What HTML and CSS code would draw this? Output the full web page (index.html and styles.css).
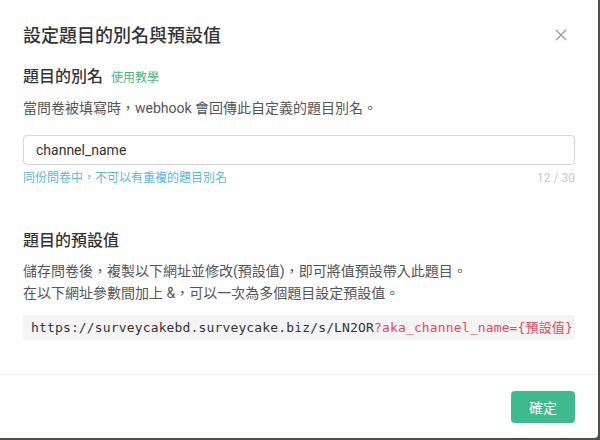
FILE: index.html
```html
<!DOCTYPE html>
<html lang="zh-Hant">
<head>
<meta charset="utf-8">
<link rel="stylesheet" href="styles.css">
</head>
<body>
<div class="modal">
  <div class="header">
    <div class="title">設定題目的別名與預設值</div>
    <svg class="close" width="12" height="12" viewBox="0 0 12 12"><path d="M1 1L11 11M11 1L1 11" stroke="#9a9a9a" stroke-width="1.3" fill="none"/></svg>
  </div>
  <div class="body">
    <div class="section-title">題目的別名 <span class="link">使用教學</span></div>
    <p class="desc">當問卷被填寫時，webhook 會回傳此自定義的題目別名。</p>
    <div class="input">channel_name</div>
    <div class="helper">
      <span class="hint">同份問卷中，不可以有重複的題目別名</span>
      <span class="count">12 / 30</span>
    </div>
    <div class="section-title second">題目的預設值</div>
    <p class="desc para">儲存問卷後，複製以下網址並修改(預設值)，即可將值預設帶入此題目。<br>在以下網址參數間加上 &amp;，可以一次為多個題目設定預設值。</p>
    <div class="code">https://surveycakebd.surveycake.biz/s/LN2OR<span class="param">?aka_channel_name={預設值}</span></div>
  </div>
  <div class="footer">
    <button class="ok">確定</button>
  </div>
</div>
</body>
</html>
```
FILE: styles.css
```css
html, body {
  margin: 0;
  padding: 0;
}
body {
  background: #4a4f4c;
  width: 600px;
  height: 440px;
  font-family: Roboto, "Noto Sans CJK TC", sans-serif;
  color: #333;
}
.modal {
  width: 598px;
  height: 438px;
  background: #fff;
  border-radius: 0 0 4px 0;
  display: flex;
  flex-direction: column;
}
.header {
  display: flex;
  justify-content: space-between;
  align-items: center;
  padding: 24px 31px 0 23px;
}
.title {
  font-size: 18px;
  line-height: 24px;
  font-weight: 500;
  color: #333;
}
.close {
  display: block;
  margin-top: -2px;
}
.body {
  flex: 1;
  padding: 0 23px;
}
.section-title {
  margin-top: 17px;
  font-size: 16px;
  line-height: 24px;
  font-weight: 500;
  color: #333;
}
.section-title.second {
  margin-top: 42px;
}
.link {
  font-size: 12px;
  font-weight: 400;
  color: #3bb883;
  margin-left: 4px;
}
.desc {
  margin: 7px 0 0;
  font-size: 14px;
  line-height: 22px;
  color: #555;
}
.input {
  margin-top: 16px;
  height: 30px;
  box-sizing: border-box;
  border: 1px solid #d6d6d6;
  border-radius: 4px;
  padding: 0 12px;
  font-size: 14px;
  line-height: 28px;
  color: #333;
}
.helper {
  margin-top: 4px;
  display: flex;
  justify-content: space-between;
  font-size: 12px;
  line-height: 18px;
}
.hint {
  color: #57b6e4;
}
.count {
  color: #c8c8c8;
}
.para {
  margin-top: 7px;
}
.code {
  margin-top: 11px;
  height: 25px;
  background: #f4f4f4;
  border-radius: 4px;
  padding: 0 8px;
  font-family: "DejaVu Sans Mono", "Noto Sans CJK TC", monospace;
  font-size: 13px;
  line-height: 25px;
  letter-spacing: 0.15px;
  color: #333;
  white-space: nowrap;
}
.param {
  color: #e8475f;
}
.footer {
  border-top: 1px solid #ebebeb;
  padding: 16px 23px 15px;
  display: flex;
  justify-content: flex-end;
}
.ok {
  width: 64px;
  height: 32px;
  border: none;
  border-radius: 4px;
  background: #3dbb8f;
  color: #fff;
  font-family: Roboto, "Noto Sans CJK TC", sans-serif;
  font-size: 14px;
  padding: 0;
}
```
